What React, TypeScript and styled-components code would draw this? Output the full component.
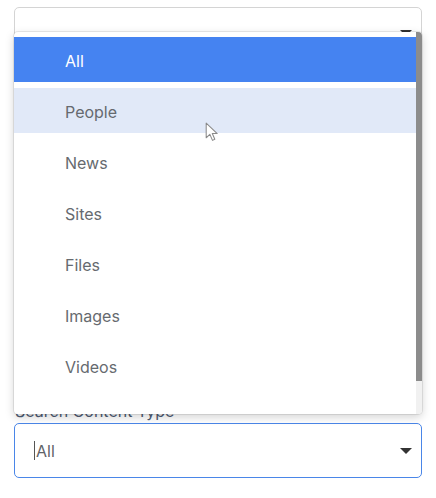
import React from "react";
import styled, { createGlobalStyle } from "styled-components";

const Global = createGlobalStyle`
  html, body { margin: 0; padding: 0; background: #ffffff; }
  body { font-family: Inter, "Noto Sans", sans-serif; }
  * { box-sizing: border-box; }
`;

const Page = styled.div`
  position: relative;
  width: 436px;
  height: 498px;
  padding: 7px 14px 0 14px;
  display: flex;
  flex-direction: column;
  overflow: hidden;
`;

const Field = styled.div<{ $gap?: number }>`
  display: flex;
  flex-direction: column;
  margin-top: ${(p) => p.$gap ?? 0}px;
`;

const Label = styled.label`
  font-size: 16px;
  line-height: 19px;
  color: #4e5b73;
  margin-bottom: 2px;
  padding-left: 1px;
`;

const SelectBox = styled.div<{ $focused?: boolean }>`
  position: relative;
  width: 408px;
  height: 55px;
  display: flex;
  align-items: center;
  padding-left: 19px;
  border: ${(p) => (p.$focused ? "1.5px solid #4a86e8" : "1px solid #d4d4d4")};
  border-radius: 5px;
  background: #fff;
  font-size: 16px;
  color: #5f6368;
`;

const Caret = styled.span`
  display: inline-block;
  width: 1px;
  height: 19px;
  background: #555;
  margin-right: 1px;
`;

const Arrow = styled.span<{ $peek?: boolean }>`
  position: absolute;
  right: 9px;
  top: 50%;
  margin-top: ${(p) => (p.$peek ? -5 : -3)}px;
  width: 0;
  height: 0;
  border-left: 6px solid transparent;
  border-right: 6px solid transparent;
  border-top: 6px solid #333;
`;

const Menu = styled.div`
  position: absolute;
  left: 14px;
  top: 32px;
  width: 408px;
  height: 382px;
  background: #fff;
  border-radius: 4px;
  box-shadow: 0 0 0 1px rgba(0, 0, 0, 0.08), 0 3px 10px rgba(0, 0, 0, 0.18);
  display: flex;
  overflow: hidden;
`;

const List = styled.ul`
  flex: 1;
  list-style: none;
  margin: 0;
  padding: 2px 0 0 0;
  display: flex;
  flex-direction: column;
`;

const Item = styled.li<{ $state?: "selected" | "hover" }>`
  flex: none;
  height: 45px;
  margin: 3px 0;
  display: flex;
  align-items: center;
  padding: 2px 0 0 51px;
  font-size: 16px;
  color: ${(p) => (p.$state === "selected" ? "#ffffff" : "#666a6f")};
  background: ${(p) =>
    p.$state === "selected" ? "#4583f1" : p.$state === "hover" ? "#e1e9f8" : "transparent"};
`;

const Track = styled.div`
  width: 6px;
  background: #f1f1f1;
  display: flex;
  flex-direction: column;
`;

const Thumb = styled.div`
  height: 349px;
  background: #8c8c8c;
`;

const Pointer = styled.svg`
  position: absolute;
  left: 205px;
  top: 122px;
`;

const items = ["All", "People", "News", "Sites", "Files", "Images", "Videos"];

export default function App() {
  return (
    <>
      <Global />
      <Page>
        <Field>
          <SelectBox>
            <Arrow $peek />
          </SelectBox>
        </Field>
        <Field $gap={340}>
          <Label>Search Content Type</Label>
          <SelectBox $focused>
            <Caret />
            All
            <Arrow />
          </SelectBox>
        </Field>
        <Menu>
          <List>
            {items.map((t, i) => (
              <Item key={t} $state={i === 0 ? "selected" : i === 1 ? "hover" : undefined}>
                {t}
              </Item>
            ))}
          </List>
          <Track>
            <Thumb />
          </Track>
        </Menu>
        <Pointer width="15" height="21" viewBox="0 0 14 20">
          <path
            d="M1 1 L1 15 L4.5 11.8 L7 17.5 L9.2 16.5 L6.8 11 L11.5 11 Z"
            fill="#ffffff"
            stroke="#8a8a8a"
            strokeWidth="1"
            strokeLinejoin="round"
          />
        </Pointer>
      </Page>
    </>
  );
}
